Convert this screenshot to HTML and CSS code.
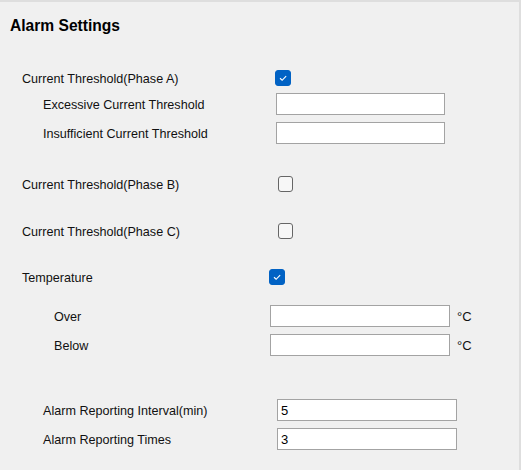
FILE: index.html
```html
<!DOCTYPE html>
<html lang="en">
<head>
<meta charset="utf-8">
<title>Alarm Settings</title>
<link rel="stylesheet" href="styles.css">
</head>
<body>
<div class="panel">
  <h1 class="title">Alarm Settings</h1>
  <div class="form">
    <div class="row row-a">
      <span class="label">Current Threshold(Phase A)</span>
      <span class="check checked"><svg viewBox="0 0 16 16"><path d="M4.6 8.3 L7 10.6 L11.6 5.8" /></svg></span>
    </div>
    <div class="row row-sub">
      <span class="label sub">Excessive Current Threshold</span>
      <input class="field field-a" type="text">
    </div>
    <div class="row row-sub2">
      <span class="label sub">Insufficient Current Threshold</span>
      <input class="field field-a" type="text">
    </div>
    <div class="row row-b">
      <span class="label">Current Threshold(Phase B)</span>
      <span class="check"></span>
    </div>
    <div class="row row-c">
      <span class="label">Current Threshold(Phase C)</span>
      <span class="check"></span>
    </div>
    <div class="row row-t">
      <span class="label">Temperature</span>
      <span class="check checked"><svg viewBox="0 0 16 16"><path d="M4.6 8.3 L7 10.6 L11.6 5.8" /></svg></span>
    </div>
    <div class="row row-over">
      <span class="label temp">Over</span>
      <input class="field field-t" type="text">
      <span class="unit">°C</span>
    </div>
    <div class="row row-below">
      <span class="label temp">Below</span>
      <input class="field field-t" type="text">
      <span class="unit">°C</span>
    </div>
    <div class="row row-int">
      <span class="label alarm">Alarm Reporting Interval(min)</span>
      <input class="field field-r" type="text" value="5">
    </div>
    <div class="row row-times">
      <span class="label alarm">Alarm Reporting Times</span>
      <input class="field field-r" type="text" value="3">
    </div>
  </div>
</div>
</body>
</html>
```

FILE: styles.css
```css
* { box-sizing: border-box; }
html, body {
  margin: 0;
  padding: 0;
  background: #f0f0f0;
}
body {
  font-family: "Liberation Sans", Arial, sans-serif;
  color: #111;
  width: 521px;
  height: 470px;
  overflow: hidden;
}
.panel {
  width: 521px;
  height: 470px;
  border-top: 2px solid #dedede;
  border-right: 2px solid #dedede;
}
.title {
  margin: 0;
  padding: 14px 0 0 10px;
  font-size: 15.6px;
  line-height: 20px;
  font-weight: bold;
  color: #000;
}
.form {
  display: flex;
  flex-direction: column;
}
.row {
  display: flex;
  align-items: center;
  height: 22px;
  font-size: 12.6px;
}
.row-a { margin-top: 31px; }
.row-sub { margin-top: 4px; }
.row-sub2 { margin-top: 7px; }
.row-b { margin-top: 29px; }
.row-c { margin-top: 25px; }
.row-t { margin-top: 24px; }
.row-over { margin-top: 17px; }
.row-below { margin-top: 7px; }
.row-int { margin-top: 43px; }
.row-times { margin-top: 7px; }

.label {
  flex: none;
  padding-left: 22px;
  padding-top: 2px;
  white-space: nowrap;
}
.row-a .label { width: 275px; }
.row-b .label, .row-c .label { width: 278px; }
.row-t .label { width: 269px; }
.label.sub { padding-left: 43px; width: 276px; }
.label.temp { padding-left: 54px; width: 270px; }
.label.alarm { padding-left: 43px; width: 277px; }

.check {
  width: 16px;
  height: 16px;
  border-radius: 3px;
  border: 1px solid #666;
  background: #f7f7f7;
  display: inline-flex;
}
.row-b .check, .row-c .check { width: 15px; }
.check.checked {
  background: #0162c4;
  border-color: #0162c4;
}
.check svg {
  width: 14px;
  height: 14px;
}
.check path {
  fill: none;
  stroke: #fff;
  stroke-width: 1.3;
}
.field {
  height: 22px;
  border: 1px solid #a3a3a3;
  background: #fff;
  font-family: "Liberation Sans", Arial, sans-serif;
  font-size: 13px;
  color: #000;
  padding: 1px 0 0 3px;
  margin: 0;
  outline: none;
}
.field-a { width: 169px; }
.field-t { width: 180px; }
.field-r { width: 180px; }
.unit {
  margin-left: 7px;
  padding-top: 1px;
  font-size: 13px;
}
```
